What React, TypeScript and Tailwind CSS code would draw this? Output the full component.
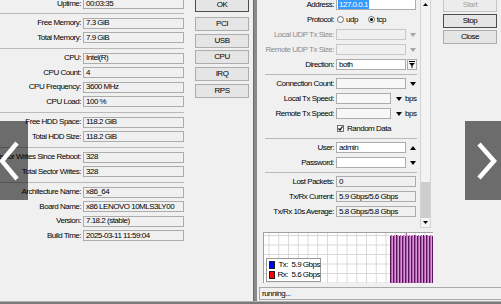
import React from 'react';

type Pair = [string, string];

const leftGroups: Pair[][] = [
    [['Uptime', '00:03:35']],
    [['Free Memory', '7.3 GiB'], ['Total Memory', '7.9 GiB']],
    [['CPU', 'Intel(R)'], ['CPU Count', '4'], ['CPU Frequency', '3600 MHz'], ['CPU Load', '100 %']],
    [['Free HDD Space', '118.2 GiB'], ['Total HDD Size', '118.2 GiB']],
    [['Sector Writes Since Reboot', '328'], ['Total Sector Writes', '328']],
    [['Architecture Name', 'x86_64'], ['Board Name', 'x86 LENOVO 10MLS3LY00'], ['Version', '7.18.2 (stable)'], ['Build Time', '2025-03-11 11:59:04']],
];

const Field = ({ children, className = '' }: { children?: React.ReactNode; className?: string }) => (
    <div className={`h-[11px] shrink-0 border border-[#acacac] flex items-center px-[2px] whitespace-nowrap overflow-hidden ${className}`}>
        {children}
    </div>
);

const Tri = ({ up = false, gray = false }: { up?: boolean; gray?: boolean }) => (
    <svg width="6" height="4" viewBox="0 0 6 4" className="shrink-0">
        <polygon points={up ? '0,4 6,4 3,0' : '0,0 6,0 3,4'} fill={gray ? '#a6a6a6' : '#000'} />
    </svg>
);

const Btn = ({ label, kind = 'normal' }: { label: string; kind?: 'normal' | 'default' | 'disabled' }) => {
    const look =
        kind === 'default'
            ? 'border-[#4d4d4d] bg-[#e5e5e5] text-black'
            : kind === 'disabled'
              ? 'border-[#c6c6c6] bg-[#ececec] text-[#a3a3a3]'
              : 'border-[#adadad] bg-[#e5e5e5] text-black';
    return <div className={`h-[14px] shrink-0 border flex items-center justify-center ${look}`}>{label}</div>;
};

const Sep = ({ className = '' }: { className?: string }) => (
    <div className={`flex items-center shrink-0 ${className}`}>
        <div className="h-px w-full bg-[#b9b9b9]" />
    </div>
);

const LeftWindow = () => (
    <div className="w-[253px] shrink-0 flex">
        <div className="w-[184px] -mt-[3.5px] flex flex-col">
            {leftGroups.map((group, gi) => (
                <div key={gi} className="flex flex-col">
                    {gi === 1 && <Sep className="h-[5px]" />}
                    {gi > 1 && <Sep className="h-[6px]" />}
                    {group.map(([label, value]) => (
                        <div key={label} className="h-[14.5px] flex items-center">
                            <div className="w-[81px] shrink-0 flex justify-end">
                                <span className="whitespace-nowrap shrink-0">{label}:</span>
                            </div>
                            <Field className="ml-[2px] w-[101px] bg-[#f0f0f0]">{value}</Field>
                        </div>
                    ))}
                </div>
            ))}
        </div>
        <div className="ml-[11px] w-[54px] -mt-[2px] flex flex-col">
            <Btn label="OK" kind="default" />
            <div className="mt-[5px] flex flex-col gap-[2.7px]">
                <Btn label="PCI" />
                <Btn label="USB" />
                <Btn label="CPU" />
                <Btn label="IRQ" />
                <Btn label="RPS" />
            </div>
        </div>
    </div>
);

const RRow = ({ label, gray = false, children }: { label: string; gray?: boolean; children?: React.ReactNode }) => (
    <div className="h-[15px] shrink-0 flex items-center">
        <div className="w-[77px] shrink-0 flex justify-end">
            <span className={`whitespace-nowrap shrink-0 ${gray ? 'text-[#8e8e8e]' : ''}`}>{label}:</span>
        </div>
        <div className="ml-[2px] flex items-center">{children}</div>
    </div>
);

const Radio = ({ on }: { on: boolean }) => (
    <div className="w-[7px] h-[7px] rounded-full border border-[#6d6d6d] bg-white flex items-center justify-center">
        {on && <div className="w-[3px] h-[3px] rounded-full bg-black" />}
    </div>
);

const DirectionBtn = () => (
    <div className="ml-px w-[10px] h-[11px] border border-[#acacac] bg-[#f4f4f4] flex items-center justify-center">
        <svg width="6" height="7" viewBox="0 0 6 7">
            <line x1="0" y1="0.5" x2="6" y2="0.5" stroke="#000" />
            <polygon points="0,2 6,2 3,5" fill="#000" />
            <line x1="3" y1="4" x2="3" y2="7" stroke="#000" />
        </svg>
    </div>
);

const Graph = () => {
    const vx = Array.from({ length: 18 }, (_, i) => 5 + i * 9.75);
    const hy = Array.from({ length: 6 }, (_, i) => 2.5 + i * 9.5);
    const tops = [3, 2, 3, 3, 2, 3, 2, 2, 3, 3, 2, 3, 3, 2, 2, 3, 0, 2, 3, 2, 3, 3, 2, 3, 2, 2, 3, 3, 2, 3, 3, 2, 3, 2, 3, 3, 2, 2, 3, 3, 2, 3, 3];
    return (
        <div className="relative mt-[4px] ml-[6px] w-[170px] h-[51px] border-t border-l border-[#a0a0a0] bg-white">
            <svg width="169" height="50" viewBox="0 0 169 50" className="block">
                {vx.map((x) => (
                    <line key={`v${x}`} x1={x} y1="0" x2={x} y2="50" stroke="#d9d9d9" />
                ))}
                {hy.map((y) => (
                    <line key={`h${y}`} x1="0" y1={y} x2="169" y2={y} stroke="#d9d9d9" />
                ))}
                {tops.map((t, i) => (
                    <rect
                        key={i}
                        x={126 + i}
                        y={t}
                        width="1"
                        height={50 - t}
                        fill={i % 3 === 0 ? '#5e155e' : i % 3 === 1 ? '#b25fb2' : '#d49ad4'}
                    />
                ))}
            </svg>
            <div className="absolute left-[2px] bottom-[1px] w-[55px] h-[24px] border border-[#9a9a9a] bg-white flex flex-col justify-center gap-[2px] pl-[2px]">
                <div className="flex items-center gap-[3px]">
                    <div className="w-[8px] h-[8px] bg-[#0000ff] border border-[#202020]" />
                    <span className="whitespace-nowrap">Tx:&nbsp; 5.9 Gbps</span>
                </div>
                <div className="flex items-center gap-[3px]">
                    <div className="w-[8px] h-[8px] bg-[#ff0000] border border-[#202020]" />
                    <span className="whitespace-nowrap">Rx:&nbsp; 5.6 Gbps</span>
                </div>
            </div>
        </div>
    );
};

const RightWindow = () => (
    <div className="flex-1 min-w-0 flex flex-col">
        <div className="h-[228px] shrink-0 flex">
            <div className="w-[163px] shrink-0 -mt-[3px] flex flex-col">
                <RRow label="Address">
                    <Field className="w-[80px] bg-white !px-[1px]">
                        <span className="h-[9px] flex items-center bg-[#3399ff] text-white px-px">127.0.0.1</span>
                    </Field>
                </RRow>
                <RRow label="Protocol">
                    <div className="flex items-center gap-[2px] pl-px">
                        <Radio on={false} />
                        <span>udp</span>
                        <div className="w-[6px]" />
                        <Radio on={true} />
                        <span>tcp</span>
                    </div>
                </RRow>
                <RRow label="Local UDP Tx Size" gray>
                    <Field className="w-[70px] bg-[#f0f0f0] border-[#c8c8c8]" />
                    <div className="ml-[4px]"><Tri gray /></div>
                </RRow>
                <RRow label="Remote UDP Tx Size" gray>
                    <Field className="w-[70px] bg-[#f0f0f0] border-[#c8c8c8]" />
                    <div className="ml-[4px]"><Tri gray /></div>
                </RRow>
                <RRow label="Direction">
                    <Field className="w-[70px] bg-white">both</Field>
                    <DirectionBtn />
                </RRow>
                <Sep className="h-[4px] pl-[8px] pr-[3px]" />
                <RRow label="Connection Count">
                    <Field className="w-[70px] bg-[#f7f7f7]" />
                    <div className="ml-[4px]"><Tri /></div>
                </RRow>
                <RRow label="Local Tx Speed">
                    <Field className="w-[55px] bg-[#f7f7f7]" />
                    <div className="ml-[5px]"><Tri /></div>
                    <span className="ml-[3px]">bps</span>
                </RRow>
                <RRow label="Remote Tx Speed">
                    <Field className="w-[55px] bg-[#f7f7f7]" />
                    <div className="ml-[5px]"><Tri /></div>
                    <span className="ml-[3px]">bps</span>
                </RRow>
                <div className="h-[15px] shrink-0 flex items-center pl-[80px] gap-[3px]">
                    <div className="w-[7px] h-[7px] border border-[#6d6d6d] bg-white flex items-center justify-center">
                        <svg width="5" height="5" viewBox="0 0 5 5">
                            <polyline points="0.5,2.5 2,4 4.5,0.5" fill="none" stroke="#000" strokeWidth="1.2" />
                        </svg>
                    </div>
                    <span>Random Data</span>
                </div>
                <Sep className="h-[4px] pl-[8px] pr-[3px]" />
                <RRow label="User">
                    <Field className="w-[70px] bg-white">admin</Field>
                    <div className="ml-[4px]"><Tri up /></div>
                </RRow>
                <RRow label="Password">
                    <Field className="w-[70px] bg-white" />
                    <div className="ml-[4px]"><Tri /></div>
                </RRow>
                <Sep className="h-[4px] pl-[8px] pr-[3px]" />
                <RRow label="Lost Packets">
                    <Field className="w-[80px] bg-[#f0f0f0]">0</Field>
                </RRow>
                <RRow label="Tx/Rx Current">
                    <Field className="w-[80px] bg-[#f0f0f0]">5.9 Gbps/5.6 Gbps</Field>
                </RRow>
                <RRow label="Tx/Rx 10s Average">
                    <Field className="w-[80px] bg-[#f0f0f0]">5.8 Gbps/5.8 Gbps</Field>
                </RRow>
            </div>
            <div className="w-[11px] shrink-0 border-x border-[#d4d4d4] bg-[#f3f3f3] flex flex-col">
                <div className="h-[9px] flex items-center justify-center">
                    <svg width="5" height="3" viewBox="0 0 5 3"><polygon points="0,3 5,3 2.5,0" fill="#000" /></svg>
                </div>
                <div className="flex-1" />
                <div className="h-[36px] bg-[#cdcdcd]" />
                <div className="h-[10px] flex items-center justify-center border-b border-[#d4d4d4]">
                    <svg width="5" height="3" viewBox="0 0 5 3"><polygon points="0,0 5,0 2.5,3" fill="#000" /></svg>
                </div>
            </div>
            <div className="ml-[12px] w-[54px] shrink-0 -mt-[2px] flex flex-col gap-[2px]">
                <Btn label="Start" kind="disabled" />
                <Btn label="Stop" kind="default" />
                <Btn label="Close" />
            </div>
        </div>
        <Graph />
        <div className="mt-[4px] ml-[2px] h-[13px] shrink-0 border border-r-0 border-[#a8a8a8] flex items-center pl-[2px]">
            running...
        </div>
    </div>
);

const NavArrow = ({ side }: { side: 'left' | 'right' }) =>
    side === 'left' ? (
        <div className="absolute left-0 top-[121px] w-[28px] h-[79px] bg-black/55">
            <svg width="28" height="79" viewBox="0 0 28 79" className="block">
                <polyline points="17,22 2,40 17,58" fill="none" stroke="#fff" strokeWidth="4.5" />
            </svg>
        </div>
    ) : (
        <div className="absolute left-[465px] top-[121px] w-[36px] h-[79px] bg-black/55">
            <svg width="36" height="79" viewBox="0 0 36 79" className="block">
                <polyline points="14,23 29,40 14,57" fill="none" stroke="#fff" strokeWidth="4.5" />
            </svg>
        </div>
    );

export default function App() {
    return (
        <div className="relative w-[501px] h-[304px] overflow-hidden bg-[#f0f0f0] text-black text-[8px] leading-none tracking-[-0.5px] font-['Liberation_Sans',Arial,sans-serif]">
            <div className="flex h-[301px]">
                <LeftWindow />
                <div className="w-[4px] shrink-0 bg-[#8a8a8a] border-l border-[#6c6c6c]" />
                <RightWindow />
            </div>
            <div className="h-[3px] bg-[#7a7a7a] border-t border-[#b0b0b0]" />
            <NavArrow side="left" />
            <NavArrow side="right" />
        </div>
    );
}
